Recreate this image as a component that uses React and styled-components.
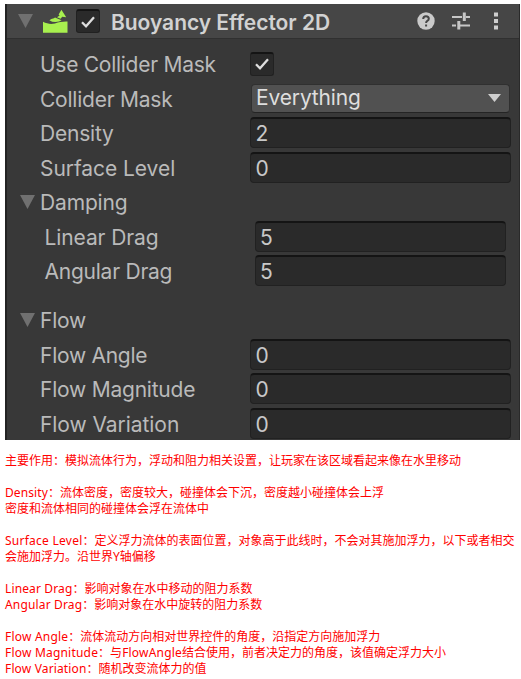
import React from "react";
import styled, { createGlobalStyle } from "styled-components";

const GlobalStyle = createGlobalStyle`
  body { margin: 0; background: #fff; }
  * { box-sizing: border-box; }
`;

const Page = styled.main`
  width: 521px;
  height: 679px;
  padding: 4px 0 0 5px;
  overflow: hidden;
  background: #fff;
`;

const Inspector = styled.section`
  width: 515px;
  height: 436px;
  overflow: hidden;
  background: #383838;
  border-left: 2px solid #232323;
  border-right: 1px solid #2a2a2a;
  color: #bababa;
  font: 21px/30px Inter, "Liberation Sans", sans-serif;
`;

const Header = styled.header`
  display: flex;
  align-items: center;
  height: 35px;
  padding: 0 20px 0 11px;
  background: #464646;
  border-bottom: 1px solid #303030;
`;

const Title = styled.h1`
  flex: 1;
  margin: 0 0 0 11px;
  padding-top: 4px;
  font-size: 21px;
  font-weight: 600;
  letter-spacing: -0.04px;
  color: #d2d2d2;
  white-space: nowrap;
`;

const Icon = styled.svg`
  display: block;
  flex: none;
  margin-left: ${(p) => p.$gap || 0}px;
`;

const Box = styled.span`
  display: grid;
  place-items: center;
  flex: none;
  width: 24px;
  height: 24px;
  margin-left: ${(p) => p.$gap || 0}px;
  border: 1px solid #212121;
  border-top: 2px solid #141414;
  border-radius: 3px;
  background: #2a2a2a;
`;

const Rows = styled.div`
  padding-top: 7.5px;
`;

const Row = styled.div`
  display: flex;
  align-items: center;
  height: 34.5px;
  margin-top: ${(p) => p.$space || 0}px;
  padding: 0 ${(p) => (p.$nested ? 13 : 8)}px 0 ${(p) => (p.$nested ? 37.5 : p.$foldout ? 12.5 : 33)}px;
`;

const Label = styled.span`
  flex: none;
  width: 210px;
  margin-left: ${(p) => p.$gap || 0}px;
  padding-top: 3px;
  letter-spacing: ${(p) => p.$spacing || 0}px;
  white-space: nowrap;
`;

const Field = styled.span`
  flex: 1;
  height: 31px;
  padding-left: 4.5px;
  border: 1px solid #212121;
  border-top: 2px solid #141414;
  border-radius: 4px;
  background: #2a2a2a;
  color: #c8c8c8;
  line-height: 30px;
`;

const Dropdown = styled.span`
  display: flex;
  flex: 1;
  align-items: center;
  justify-content: space-between;
  height: 29px;
  margin: 0 1px;
  padding: 0 8px 0 4px;
  border: 1px solid #303030;
  border-bottom-color: #242424;
  border-radius: 4px;
  background: #515151;
  color: #dedede;
  letter-spacing: -0.15px;
  line-height: 26px;
`;

const Notes = styled.section`
  padding-top: 13px;
  color: #f00;
  font: 12px/16px "Noto Sans", "Noto Sans CJK SC", sans-serif;
`;

const Note = styled.p`
  margin: 0;
  min-height: 16px;
  white-space: pre;
`;

const Run = styled.span`
  letter-spacing: ${(p) => p.$spacing || 0}px;
`;

function Fold() {
  return (
    <Icon width="15" height="14" viewBox="0 0 15 14">
      <path d="M0 0H15L7.5 14Z" fill="#707070" />
    </Icon>
  );
}

function Check({ gap }) {
  return (
    <Box $gap={gap}>
      <Icon width="18" height="18" viewBox="0 0 18 18">
        <path d="M3 9.2L7 13.2L15 4.2" fill="none" stroke="#dedede" strokeWidth="2.3" />
      </Icon>
    </Box>
  );
}

function Property({ name, value, nested, spacing }) {
  return (
    <Row $nested={nested}>
      <Label $spacing={spacing}>{name}</Label>
      <Field>{value}</Field>
    </Row>
  );
}

const notes = [
  [["主要作用：模拟流体行为，浮动和阻力相关设置，让玩家在该区域看起来像在水里移动"]],
  [],
  [["Density", 0.1], ["：流体密度，密度较大，碰撞体会下沉，密度越小碰撞体会上浮"]],
  [["密度和流体相同的碰撞体会浮在流体中"]],
  [],
  [["Surface Level", 0.25], ["：定义浮力流体的表面位置，对象高于此线时，不会对其施加浮力，以下或者相交"]],
  [["会施加浮力。沿世界Y轴偏移"]],
  [],
  [["Linear Drag", 0.13], ["：影响对象在水中移动的阻力系数"]],
  [["Angular Drag", 0.16], ["：影响对象在水中旋转的阻力系数"]],
  [],
  [["Flow Angle", 0.2], ["：流体流动方向相对世界控件的角度，沿指定方向施加浮力"]],
  [["Flow Magnitude", 0.2], ["：与"], ["FlowAngle", 0.2], ["结合使用，前者决定力的角度，该值确定浮力大小"]],
  [["Flow Variation", 0.15], ["：随机改变流体力的值"]],
];

export default function App() {
  return (
    <Page>
      <GlobalStyle />
      <Inspector>
        <Header>
          <Fold />
          <Icon $gap={10} width="25" height="24" viewBox="0 0 25 24">
            <path d="M0 12.8C4 14.8 8 15.4 12 14.4C16 13.2 20 12.4 24.5 12.6V23.8H0Z" fill="#a8f04f" />
            <path d="M6.4 11.2Q8 9.6 11 9.2L12 8.4L18.6 11.2Q16.5 12.6 12.5 13.1Q9 13 6.4 11.2Z" fill="#a8f04f" />
            <path d="M18.4 0.8L23.2 8.2L19.2 7.8L17.6 9.8L14 8.2L16.6 6.4L15.6 5.6Z" fill="#a8f04f" />
          </Icon>
          <Check gap={8} />
          <Title>Buoyancy Effector 2D</Title>
          <Icon width="18" height="18" viewBox="0 0 18 18">
            <circle cx="9" cy="9" r="8.7" fill="#cacaca" />
            <path d="M6.2 7Q6.2 4.2 9 4.2Q11.8 4.2 11.8 6.7Q11.8 8 10.3 8.9Q9.1 9.6 9.1 11M9.1 12.5V14.5" fill="none" stroke="#464646" strokeWidth="2" />
          </Icon>
          <Icon $gap={17} width="18" height="18" viewBox="0 0 18 18">
            <path d="M0 5H10M14 5H18M0 13.5H4M8 13.5H18" stroke="#c6c6c6" strokeWidth="2" />
            <path d="M12.3 0.5V9M6.8 9V17.5" stroke="#c6c6c6" strokeWidth="3" />
          </Icon>
          <Icon $gap={23} width="6" height="18" viewBox="0 0 6 18">
            <path d="M1 0.5H5V4.5H1ZM1 7H5V11H1ZM1 13.5H5V17.5H1Z" fill="#cecece" />
          </Icon>
        </Header>
        <Rows>
          <Row>
            <Label $spacing={-0.27}>Use Collider Mask</Label>
            <Check />
          </Row>
          <Row>
            <Label $spacing={-0.23}>Collider Mask</Label>
            <Dropdown>
              Everything
              <Icon width="13" height="8" viewBox="0 0 13 8">
                <path d="M0 0H13L6.5 8Z" fill="#cfcfcf" />
              </Icon>
            </Dropdown>
          </Row>
          <Property name="Density" value="2" spacing={-0.2} />
          <Property name="Surface Level" value="0" spacing={-0.06} />
          <Row $foldout>
            <Fold />
            <Label $gap={5.5} $spacing={-0.15}>Damping</Label>
          </Row>
          <Property nested name="Linear Drag" value="5" spacing={-0.1} />
          <Property nested name="Angular Drag" value="5" spacing={-0.24} />
          <Row $foldout $space={14.5}>
            <Fold />
            <Label $gap={5.5} $spacing={-0.2}>Flow</Label>
          </Row>
          <Property name="Flow Angle" value="0" spacing={-0.26} />
          <Property name="Flow Magnitude" value="0" spacing={-0.22} />
          <Property name="Flow Variation" value="0" spacing={-0.06} />
        </Rows>
      </Inspector>
      <Notes>
        {notes.map((runs, i) => (
          <Note key={i}>
            {runs.map(([text, spacing], j) => (
              <Run key={j} $spacing={spacing}>{text}</Run>
            ))}
          </Note>
        ))}
      </Notes>
    </Page>
  );
}
